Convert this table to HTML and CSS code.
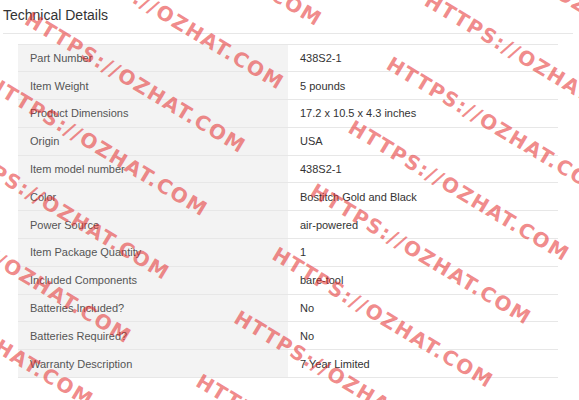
FILE: index.html
```html
<!DOCTYPE html>
<html lang="en">
<head>
<meta charset="utf-8">
<title>Technical Details</title>
<link rel="stylesheet" href="styles.css">
</head>
<body>
<div class="page">
  <section class="details">
    <h2 class="details-title">Technical Details</h2>
    <div class="spec-table">
      <div class="spec-row"><div class="spec-label">Part Number</div><div class="spec-value">438S2-1</div></div>
      <div class="spec-row"><div class="spec-label">Item Weight</div><div class="spec-value">5 pounds</div></div>
      <div class="spec-row"><div class="spec-label">Product Dimensions</div><div class="spec-value">17.2 x 10.5 x 4.3 inches</div></div>
      <div class="spec-row"><div class="spec-label">Origin</div><div class="spec-value">USA</div></div>
      <div class="spec-row"><div class="spec-label">Item model number</div><div class="spec-value">438S2-1</div></div>
      <div class="spec-row"><div class="spec-label">Color</div><div class="spec-value">Bostitch Gold and Black</div></div>
      <div class="spec-row"><div class="spec-label">Power Source</div><div class="spec-value">air-powered</div></div>
      <div class="spec-row"><div class="spec-label">Item Package Quantity</div><div class="spec-value">1</div></div>
      <div class="spec-row"><div class="spec-label">Included Components</div><div class="spec-value">bare-tool</div></div>
      <div class="spec-row"><div class="spec-label">Batteries Included?</div><div class="spec-value">No</div></div>
      <div class="spec-row"><div class="spec-label">Batteries Required?</div><div class="spec-value">No</div></div>
      <div class="spec-row"><div class="spec-label">Warranty Description</div><div class="spec-value">7 Year Limited</div></div>
    </div>
  </section>

  <div class="wm-layer" aria-hidden="true">
    <div class="wm-grid">
      <div class="wm-row"><span class="wm">HTTPS://OZHAT.COM</span><span class="wm">HTTPS://OZHAT.COM</span><span class="wm">HTTPS://OZHAT.COM</span><span class="wm">HTTPS://OZHAT.COM</span></div>
      <div class="wm-row"><span class="wm">HTTPS://OZHAT.COM</span><span class="wm">HTTPS://OZHAT.COM</span><span class="wm">HTTPS://OZHAT.COM</span><span class="wm">HTTPS://OZHAT.COM</span></div>
      <div class="wm-row"><span class="wm">HTTPS://OZHAT.COM</span><span class="wm">HTTPS://OZHAT.COM</span><span class="wm">HTTPS://OZHAT.COM</span><span class="wm">HTTPS://OZHAT.COM</span></div>
      <div class="wm-row"><span class="wm">HTTPS://OZHAT.COM</span><span class="wm">HTTPS://OZHAT.COM</span><span class="wm">HTTPS://OZHAT.COM</span><span class="wm">HTTPS://OZHAT.COM</span></div>
      <div class="wm-row"><span class="wm">HTTPS://OZHAT.COM</span><span class="wm">HTTPS://OZHAT.COM</span><span class="wm">HTTPS://OZHAT.COM</span><span class="wm">HTTPS://OZHAT.COM</span></div>
      <div class="wm-row"><span class="wm">HTTPS://OZHAT.COM</span><span class="wm">HTTPS://OZHAT.COM</span><span class="wm">HTTPS://OZHAT.COM</span><span class="wm">HTTPS://OZHAT.COM</span></div>
      <div class="wm-row"><span class="wm">HTTPS://OZHAT.COM</span><span class="wm">HTTPS://OZHAT.COM</span><span class="wm">HTTPS://OZHAT.COM</span><span class="wm">HTTPS://OZHAT.COM</span></div>
      <div class="wm-row"><span class="wm">HTTPS://OZHAT.COM</span><span class="wm">HTTPS://OZHAT.COM</span><span class="wm">HTTPS://OZHAT.COM</span><span class="wm">HTTPS://OZHAT.COM</span></div>
      <div class="wm-row"><span class="wm">HTTPS://OZHAT.COM</span><span class="wm">HTTPS://OZHAT.COM</span><span class="wm">HTTPS://OZHAT.COM</span><span class="wm">HTTPS://OZHAT.COM</span></div>
      <div class="wm-row"><span class="wm">HTTPS://OZHAT.COM</span><span class="wm">HTTPS://OZHAT.COM</span><span class="wm">HTTPS://OZHAT.COM</span><span class="wm">HTTPS://OZHAT.COM</span></div>
    </div>
  </div>
</div>
</body>
</html>
```

FILE: styles.css
```css
html, body {
  margin: 0;
  padding: 0;
  background: #ffffff;
  overflow: hidden;
}

.page {
  position: relative;
  width: 579px;
  height: 400px;
  overflow: hidden;
  font-family: "Liberation Sans", Arial, sans-serif;
}

.details {
  margin: 0 6px 0 3px;
}

.details-title {
  margin: 0;
  padding: 4.5px 0 8.5px 0;
  font-size: 14px;
  line-height: 20px;
  font-weight: normal;
  color: #333333;
  border-bottom: 1px solid #e7e7e7;
}

.spec-table {
  margin: 9.5px 15px 0 15px;
  border-bottom: 1px solid #e7e7e7;
}

.spec-row {
  display: grid;
  grid-template-columns: 270px 270px;
  height: 27.8px;
  box-sizing: border-box;
  border-top: 1px solid #e7e7e7;
  font-size: 11px;
  line-height: 14px;
}

.spec-label,
.spec-value {
  display: flex;
  align-items: center;
  padding: 0 12px;
}

.spec-label {
  background: #f3f3f3;
  color: #555555;
}

.spec-value {
  color: #333333;
}

/* watermark overlay */
.wm-layer {
  position: absolute;
  inset: 0;
  overflow: hidden;
  pointer-events: none;
}

.wm-grid {
  position: absolute;
  left: 0;
  top: 0;
  transform-origin: 0 0;
  transform: rotate(31deg) translate(-301px, -332px);
  display: flex;
  flex-direction: column;
}

.wm-row {
  display: flex;
  align-items: center;
  height: 74px;
}

.wm {
  flex: none;
  width: 333px;
  white-space: nowrap;
  font-family: "DejaVu Sans", sans-serif;
  font-weight: bold;
  font-size: 20px;
  line-height: 20px;
  letter-spacing: 1.5px;
  color: rgba(228, 40, 40, 0.55);
}
```
